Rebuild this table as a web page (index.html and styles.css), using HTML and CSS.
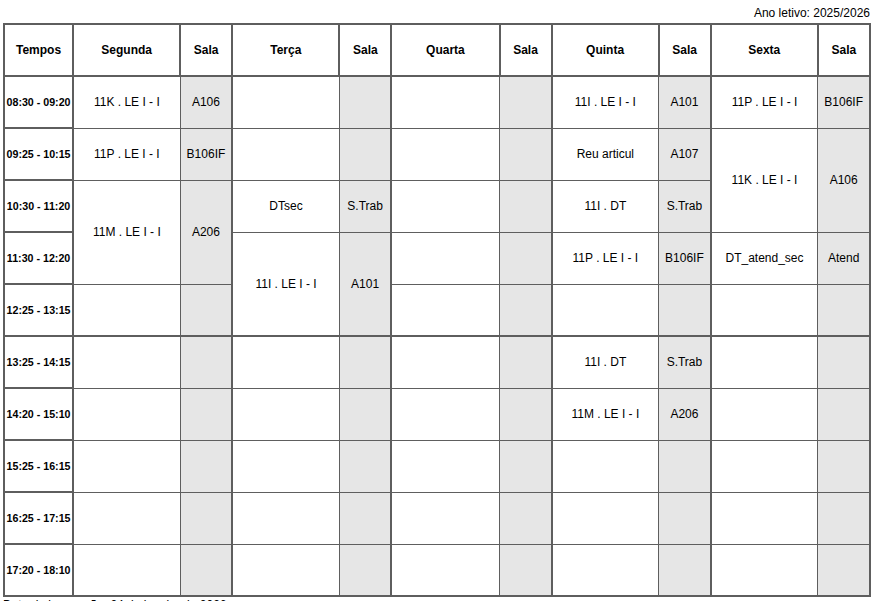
FILE: index.html
```html
<!DOCTYPE html>
<html lang="pt">
<head>
<meta charset="utf-8">
<title>Horário</title>
<link rel="stylesheet" href="styles.css">
</head>
<body>
<div class="page">
  <div class="year">Ano letivo: 2025/2026</div>
  <table class="timetable">
    <colgroup>
      <col class="c-time">
      <col class="c-day"><col class="c-room">
      <col class="c-day"><col class="c-room">
      <col class="c-day c-wide"><col class="c-room">
      <col class="c-day"><col class="c-room">
      <col class="c-day"><col class="c-room">
    </colgroup>
    <thead>
      <tr>
        <th class="time">Tempos</th>
        <th class="day">Segunda</th><th class="room">Sala</th>
        <th class="day">Terça</th><th class="room">Sala</th>
        <th class="day">Quarta</th><th class="room">Sala</th>
        <th class="day">Quinta</th><th class="room">Sala</th>
        <th class="day">Sexta</th><th class="room">Sala</th>
      </tr>
    </thead>
    <tbody>
      <tr>
        <td class="time">08:30 - 09:20</td>
        <td class="day">11K . LE I - I</td><td class="room">A106</td>
        <td class="day"></td><td class="room"></td>
        <td class="day"></td><td class="room"></td>
        <td class="day">11I . LE I - I</td><td class="room">A101</td>
        <td class="day">11P . LE I - I</td><td class="room">B106IF</td>
      </tr>
      <tr>
        <td class="time">09:25 - 10:15</td>
        <td class="day">11P . LE I - I</td><td class="room">B106IF</td>
        <td class="day"></td><td class="room"></td>
        <td class="day"></td><td class="room"></td>
        <td class="day">Reu articul</td><td class="room">A107</td>
        <td class="day" rowspan="2">11K . LE I - I</td><td class="room" rowspan="2">A106</td>
      </tr>
      <tr>
        <td class="time">10:30 - 11:20</td>
        <td class="day" rowspan="2">11M . LE I - I</td><td class="room" rowspan="2">A206</td>
        <td class="day">DTsec</td><td class="room">S.Trab</td>
        <td class="day"></td><td class="room"></td>
        <td class="day">11I . DT</td><td class="room">S.Trab</td>
      </tr>
      <tr>
        <td class="time">11:30 - 12:20</td>
        <td class="day" rowspan="2">11I . LE I - I</td><td class="room" rowspan="2">A101</td>
        <td class="day"></td><td class="room"></td>
        <td class="day">11P . LE I - I</td><td class="room">B106IF</td>
        <td class="day">DT_atend_sec</td><td class="room">Atend</td>
      </tr>
      <tr>
        <td class="time">12:25 - 13:15</td>
        <td class="day"></td><td class="room"></td>
        <td class="day"></td><td class="room"></td>
        <td class="day"></td><td class="room"></td>
        <td class="day"></td><td class="room"></td>
      </tr>
      <tr class="afternoon">
        <td class="time">13:25 - 14:15</td>
        <td class="day"></td><td class="room"></td>
        <td class="day"></td><td class="room"></td>
        <td class="day"></td><td class="room"></td>
        <td class="day">11I . DT</td><td class="room">S.Trab</td>
        <td class="day"></td><td class="room"></td>
      </tr>
      <tr>
        <td class="time">14:20 - 15:10</td>
        <td class="day"></td><td class="room"></td>
        <td class="day"></td><td class="room"></td>
        <td class="day"></td><td class="room"></td>
        <td class="day">11M . LE I - I</td><td class="room">A206</td>
        <td class="day"></td><td class="room"></td>
      </tr>
      <tr>
        <td class="time">15:25 - 16:15</td>
        <td class="day"></td><td class="room"></td>
        <td class="day"></td><td class="room"></td>
        <td class="day"></td><td class="room"></td>
        <td class="day"></td><td class="room"></td>
        <td class="day"></td><td class="room"></td>
      </tr>
      <tr>
        <td class="time">16:25 - 17:15</td>
        <td class="day"></td><td class="room"></td>
        <td class="day"></td><td class="room"></td>
        <td class="day"></td><td class="room"></td>
        <td class="day"></td><td class="room"></td>
        <td class="day"></td><td class="room"></td>
      </tr>
      <tr>
        <td class="time">17:20 - 18:10</td>
        <td class="day"></td><td class="room"></td>
        <td class="day"></td><td class="room"></td>
        <td class="day"></td><td class="room"></td>
        <td class="day"></td><td class="room"></td>
        <td class="day"></td><td class="room"></td>
      </tr>
    </tbody>
  </table>
  <div class="footer">Data de impressão: 24 de janeiro de 2026</div>
</div>
</body>
</html>
```

FILE: styles.css
```css
html, body {
  margin: 0;
  padding: 0;
  background: #ffffff;
}

body {
  font-family: "Liberation Sans", Arial, sans-serif;
  font-size: 12px;
  color: #000000;
}

.page {
  padding: 6px 0 0 3px;
  width: 868px;
}

.year {
  text-align: right;
  height: 17px;
  line-height: 14px;
  padding-right: 1px;
}

.timetable {
  border-collapse: collapse;
  table-layout: fixed;
  width: 868px;
  border: 2px solid #5e5e5e;
}

.c-time { width: 69px; }
.c-day { width: 107px; }
.c-wide { width: 108px; }
.c-room { width: 52px; }

.timetable th,
.timetable td {
  border: 1px solid #5e5e5e;
  text-align: center;
  vertical-align: middle;
  padding: 0;
  height: 50px;
  white-space: nowrap;
  overflow: hidden;
}

.timetable th {
  font-weight: bold;
  font-size: 12px;
  border-width: 2px;
}

.timetable td.time {
  font-weight: bold;
  font-size: 10.67px;
  border-width: 2px;
}

.timetable td.day {
  border-left-width: 2px;
}

.timetable td.room {
  background: #e6e6e6;
}

.timetable tr.afternoon td {
  border-top-width: 2px;
}

.footer {
  margin-top: 1px;
  line-height: 14px;
}
```
